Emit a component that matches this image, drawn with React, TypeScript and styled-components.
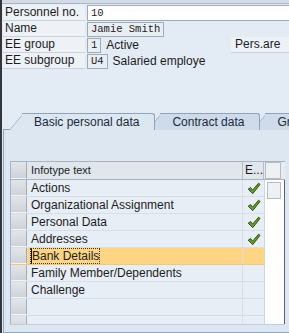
import styled, { createGlobalStyle } from 'styled-components'

const GlobalStyle = createGlobalStyle`
  html, body {
    margin: 0;
    padding: 0;
    background: #e3ebf4;
  }
  body {
    font-family: 'Liberation Sans', Arial, sans-serif;
    font-size: 12px;
    color: #1c1c1c;
  }
`

type Field = { label: string; parts: React.ReactNode }

const rows = [
  { text: 'Actions', check: true },
  { text: 'Organizational Assignment', check: true },
  { text: 'Personal Data', check: true },
  { text: 'Addresses', check: true },
  { text: 'Bank Details', check: false, selected: true },
  { text: 'Family Member/Dependents', check: false },
  { text: 'Challenge', check: false },
  { text: '', check: false },
  { text: '', check: false },
]

const Check = () => (
  <svg width='14' height='13' viewBox='0 0 14 13'>
    <path
      d='M1.2 7.2 L3.6 5.6 L5.6 8.2 L11.6 1.2 L13 2.4 L5.8 11.6 Z'
      fill='#6aa51f'
      stroke='#2f4a12'
      strokeWidth='1'
      strokeLinejoin='round'
    />
  </svg>
)

const App = () => {
  const fields: Field[] = [
    { label: 'Personnel no.', parts: <Input>10</Input> },
    { label: 'Name', parts: <MonoBox>Jamie Smith</MonoBox> },
    {
      label: 'EE group',
      parts: (
        <>
          <MonoBox>1</MonoBox>
          <Plain>Active</Plain>
          <RightLabel>Pers.are</RightLabel>
        </>
      ),
    },
    {
      label: 'EE subgroup',
      parts: (
        <>
          <MonoBox>U4</MonoBox>
          <Plain>Salaried employe</Plain>
        </>
      ),
    },
  ]

  return (
    <>
      <GlobalStyle />
      <Screen>
        <TopStrip />
        <Header>
          {fields.map((f) => (
            <FieldRow key={f.label}>
              <Label>{f.label}</Label>
              <Value>{f.parts}</Value>
            </FieldRow>
          ))}
        </Header>
        <Tabs>
          <Tab $active>Basic personal data</Tab>
          <Tab>Contract data</Tab>
          <Tab>Gr</Tab>
        </Tabs>
        <Panel>
          <Table>
            <HeadRow>
              <Selector />
              <HeadCell>Infotype text</HeadCell>
              <HeadCell $narrow>E...</HeadCell>
              <ScrollHead>
                <Thumb />
              </ScrollHead>
            </HeadRow>
            <Body>
              <Rows>
                {rows.map((r, i) => (
                  <Row key={i} $selected={r.selected}>
                    <Selector />
                    <TextCell>
                      {r.selected ? <Focus>{r.text}</Focus> : r.text}
                    </TextCell>
                    <CheckCell>{r.check && <Check />}</CheckCell>
                  </Row>
                ))}
              </Rows>
              <Track>
                <Thumb />
              </Track>
            </Body>
          </Table>
        </Panel>
      </Screen>
    </>
  )
}

const Screen = styled.div`
  width: 287px;
  height: 333px;
  border-left: 2px solid #33373c;
  background: #e3ebf4;
  overflow: hidden;
  display: flex;
  flex-direction: column;
`
const TopStrip = styled.div`
  height: 3px;
  background: #d3dbe4;
  border-bottom: 1px solid #aab6c3;
`
const Header = styled.div`
  display: flex;
  flex-direction: column;
  padding: 1px 0 0 1px;
`
const FieldRow = styled.div`
  display: flex;
  height: 16px;
  align-items: center;
`
const Label = styled.div`
  width: 80px;
  height: 15px;
  line-height: 15px;
  padding-left: 2px;
  background: #eef2f7;
  border-bottom: 1px solid #c8d2dc;
  flex-shrink: 0;
`
const Value = styled.div`
  display: flex;
  align-items: center;
  flex: 1;
  margin-left: 2px;
  height: 16px;
  white-space: nowrap;
`
const Input = styled.div`
  flex: 1;
  height: 14px;
  line-height: 14px;
  background: #fff;
  border: 1px solid #9daab8;
  border-right: none;
  padding-left: 3px;
  font-family: 'Liberation Mono', 'Courier New', monospace;
  font-size: 10.5px;
`
const MonoBox = styled.div`
  height: 13px;
  line-height: 13px;
  padding: 0 3px;
  background: #e9eef3;
  border: 1px solid #9eabb8;
  font-family: 'Liberation Mono', 'Courier New', monospace;
  font-size: 10.5px;
`
const Plain = styled.span`
  margin-left: 5px;
`
const RightLabel = styled.div`
  margin-left: auto;
  width: 54px;
  height: 15px;
  line-height: 15px;
  padding-left: 4px;
  background: #eef2f7;
  border-bottom: 1px solid #c8d2dc;
`
const Tabs = styled.div`
  display: flex;
  margin: 44px 0 0 20px;
  height: 16px;
  position: relative;
  z-index: 1;
  white-space: nowrap;
`
const Tab = styled.div<{ $active?: boolean }>`
  position: relative;
  height: 16px;
  line-height: 17px;
  padding: 0 15px 0 12px;
  margin-right: 5px;
  color: #1b2a3a;
  background: ${(p) => (p.$active ? '#dde7f2' : '#cddbea')};
  border-top: 1px solid #8ea3b9;
  border-right: 1px solid #8ea3b9;
  border-radius: 0 3px 0 0;
  flex-shrink: 0;
  &::before {
    content: '';
    position: absolute;
    left: -13px;
    top: -1px;
    width: 20px;
    height: 16px;
    background: inherit;
    border-left: 1px solid #8ea3b9;
    border-top: 1px solid #8ea3b9;
    border-radius: 3px 0 0 0;
    transform: skewX(-40deg);
    transform-origin: bottom left;
    z-index: -1;
  }
  &::after {
    content: '';
    position: absolute;
    left: 0;
    right: 0;
    bottom: -1px;
    height: 1px;
    background: ${(p) => (p.$active ? '#dde7f2' : 'transparent')};
  }
`
const Panel = styled.div`
  flex: 1;
  margin-left: 1px;
  border: 1px solid #8ea3b9;
  border-right: none;
  background: #dde7f2;
  padding: 31px 0 0 6px;
`
const Table = styled.div`
  display: flex;
  flex-direction: column;
  width: 275px;
  height: 164px;
  box-sizing: border-box;
  border-left: 1px solid #a7b4c1;
  border-bottom: 1px solid #c2ccd6;
`
const HeadRow = styled.div`
  display: flex;
  height: 17px;
  flex-shrink: 0;
  background: #e0e6ec;
  border-top: 1px solid #a9b4bf;
  border-bottom: 1px solid #a9b4bf;
`
const Selector = styled.div`
  width: 16px;
  flex-shrink: 0;
  background: linear-gradient(#e2e5e8, #cfd3d8);
  border-right: 1px solid #a3adb7;
  border-bottom: 1px solid #f2f4f6;
  box-sizing: border-box;
`
const HeadCell = styled.div<{ $narrow?: boolean }>`
  ${(p) => (p.$narrow ? 'width: 21px; padding-left: 2px; font-size: 12px;' : 'flex: 1; padding-left: 4px; font-size: 11px;')}
  line-height: 17px;
  border-right: 1px solid #b3bdc7;
  box-sizing: border-box;
`
const ScrollHead = styled.div`
  width: 21px;
  background: #e8ecf0;
  padding: 0 4px 0 1px;
  box-sizing: border-box;
  display: flex;
`
const Body = styled.div`
  display: flex;
  flex: 1;
  overflow: hidden;
`
const Rows = styled.div`
  display: flex;
  flex-direction: column;
  flex: 1;
`
const Row = styled.div<{ $selected?: boolean }>`
  display: flex;
  height: 17px;
  flex-shrink: 0;
  background: ${(p) => (p.$selected ? '#fdd583' : '#e8eef6')};
  border-bottom: 1px solid ${(p) => (p.$selected ? '#f5c86a' : '#d6dee7')};
  box-sizing: border-box;
`
const TextCell = styled.div`
  flex: 1;
  padding-left: 4px;
  line-height: 16px;
  white-space: nowrap;
  overflow: hidden;
  border-right: 1px solid #d6dee7;
`
const Focus = styled.span`
  outline: 1px dotted #4a3a10;
  outline-offset: 0;
  border-left: 1px solid #000;
`
const CheckCell = styled.div`
  width: 21px;
  display: flex;
  align-items: center;
  justify-content: center;
  box-sizing: border-box;
`
const Track = styled.div`
  width: 21px;
  background: #fff;
  border-left: 1px solid #cfd6dd;
  border-right: 1px solid #5b6168;
  box-sizing: border-box;
  padding: 2px 3px 0 2px;
`
const Thumb = styled.div`
  flex: 1;
  height: 15px;
  background: #eef1f4;
  border: 1px solid #b4bdc6;
`

export default App
